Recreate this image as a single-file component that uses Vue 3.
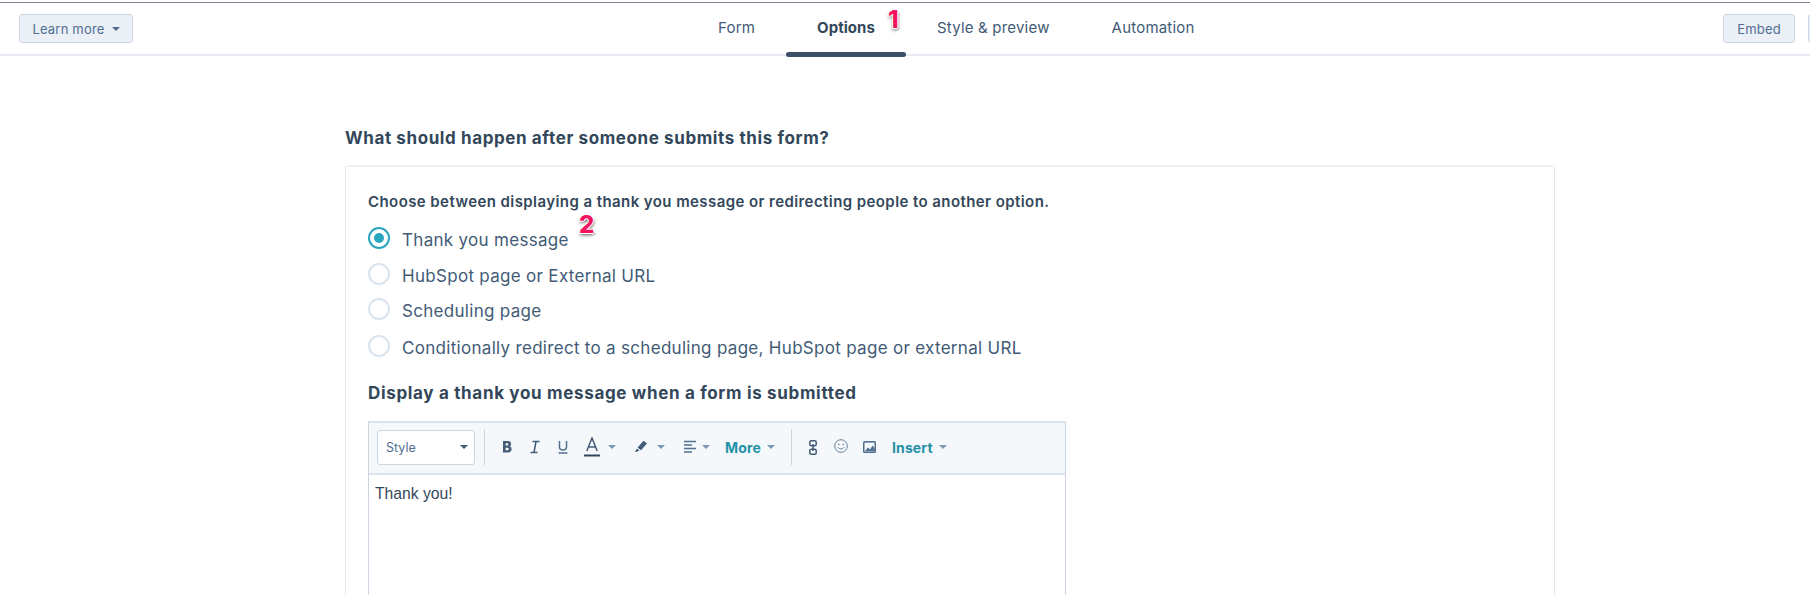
<script setup>
const tabs = [
  { label: 'Form' },
  { label: 'Options', active: true },
  { label: 'Style & preview' },
  { label: 'Automation' },
]
const options = [
  { label: 'Thank you message', checked: true },
  { label: 'HubSpot page or External URL' },
  { label: 'Scheduling page' },
  { label: 'Conditionally redirect to a scheduling page, HubSpot page or external URL' },
]
</script>

<template>
  <div class="page">
    <header class="topbar">
      <div class="side left">
        <button class="btn learn">Learn more <i class="caret"></i></button>
      </div>
      <nav class="tabs">
        <a v-for="t in tabs" :key="t.label" class="tab" :class="{ active: t.active }">
          {{ t.label }}
          <span v-if="t.active" class="marker marker-one">1</span>
        </a>
      </nav>
      <div class="side right">
        <button class="btn embed">Embed</button>
        <button class="btn stub"></button>
      </div>
    </header>

    <main class="content">
      <h2 class="title">What should happen after someone submits this form?</h2>
      <section class="card">
        <p class="lead">Choose between displaying a thank you message or redirecting people to another option.</p>
        <div class="radios">
          <label v-for="o in options" :key="o.label" class="radio">
            <span class="dot" :class="{ on: o.checked }"></span>
            <span class="radio-text">{{ o.label }}
              <span v-if="o.checked" class="marker marker-two">2</span>
            </span>
          </label>
        </div>
        <h3 class="sub">Display a thank you message when a form is submitted</h3>
        <div class="editor">
          <div class="toolbar">
            <div class="select"><span>Style</span><i class="caret dark"></i></div>
            <span class="sep first"></span>
            <svg class="t-b" viewBox="0 0 14 14" width="14" height="14"><path fill="#425b76" d="M3 1h4.800c2.100 0 3.300 1.100 3.300 2.900 0 1.100-.6 1.900-1.500 2.300 1.200.4 2 1.300 2 2.700 0 2-1.400 3.600-3.600 3.600H3zm2.600 2.300v2.300h1.600c.7 0 1.200-.5 1.200-1.200s-.5-1.100-1.200-1.100zm0 4.400v2.500h1.900c.8 0 1.300-.5 1.300-1.300s-.5-1.200-1.300-1.200z"/></svg>
            <svg class="t-i" viewBox="0 0 14 14" width="14" height="14"><path fill="none" stroke="#425b76" stroke-width="1.500" d="M4.500 1.500h7M2.500 12.500h7M8 1.500 6 12.500"/></svg>
            <svg class="t-u" viewBox="0 0 14 14" width="14" height="14"><path fill="none" stroke="#516f90" stroke-width="1.500" d="M3.500 1v6c0 2 1.400 3 3.500 3s3.500-1 3.500-3V1M2.500 13h9"/></svg>
            <svg class="t-a" viewBox="0 0 16 20" width="16" height="20"><path fill="none" stroke="#425b76" stroke-width="1.500" d="M2.800 14 8 1l5.200 13M4.500 10h7"/><path stroke="#33475b" stroke-width="2" d="M0 18.500h16"/></svg>
            <i class="caret soft c-a"></i>
            <svg class="t-pen" viewBox="0 0 14 14" width="14" height="14"><path fill="#425b76" d="M9.500.8 13 3.600 7 10.200 3.600 7.600zM3 8.500l2.300 1.900-1.600 1.200-2.900.4z"/></svg>
            <i class="caret soft c-pen"></i>
            <svg class="t-align" viewBox="0 0 14 14" width="14" height="14"><path stroke="#516f90" stroke-width="1.500" d="M1 1.500h12M1 5h8M1 8.500h12M1 12h8"/></svg>
            <i class="caret soft c-align"></i>
            <span class="link-btn more">More <i class="caret soft"></i></span>
            <span class="sep second"></span>
            <svg class="t-link" viewBox="0 0 8 15" width="8" height="15"><g fill="none" stroke="#425b76" stroke-width="1.500"><rect x=".8" y=".8" width="6.400" height="5" rx="1.500"/><rect x=".8" y="9.200" width="6.400" height="5" rx="1.500"/></g><path stroke="#425b76" stroke-width="1.500" d="M4 4v7"/></svg>
            <svg class="t-smile" viewBox="0 0 16 16" width="14" height="14"><circle cx="8" cy="8" r="7.200" fill="none" stroke="#516f90" stroke-width="1"/><circle cx="5.500" cy="6.300" r=".9" fill="#516f90"/><circle cx="10.500" cy="6.300" r=".9" fill="#516f90"/><path fill="none" stroke="#516f90" d="M4.500 9.500c1.700 2.400 5.300 2.400 7 0"/></svg>
            <svg class="t-img" viewBox="0 0 13 12" width="13" height="12"><rect width="13" height="12" rx="1.500" fill="#516f90"/><rect x="1.500" y="1.600" width="10" height="8.800" fill="#f5f8fa"/><path fill="#516f90" d="M2 10l3-3.500 2 2 2.600-4 2 3v2.500z"/></svg>
            <span class="link-btn insert">Insert <i class="caret soft"></i></span>
          </div>
          <div class="editor-body">Thank you!</div>
        </div>
      </section>
    </main>
  </div>
</template>

<style>
html, body { margin: 0; background: #fff; overflow: hidden; }
</style>

<style scoped>
.page {
  width: 1810px;
  height: 593px;
  margin-top: 2px;
  box-sizing: border-box;
  overflow: hidden;
  position: relative;
  background: #fff;
  font-family: Inter, "Noto Sans", sans-serif;
  color: #33475b;
  border-top: 1px solid #7c8894;
}
.topbar {
  display: flex;
  align-items: flex-start;
  justify-content: space-between;
  height: 51px;
  border-bottom: 2px solid #e5ebf1;
  position: relative;
}
.side { display: flex; padding-top: 11px; }
.side.left { padding-left: 19px; }
.side.right { gap: 13px; margin-right: -70px; }
.btn {
  box-sizing: border-box;
  height: 29px;
  padding: 0;
  background: #eaf0f6;
  border: 1px solid #cbd6e2;
  border-radius: 3px;
  color: #506e91;
  font: 400 13px Inter, sans-serif;
  letter-spacing: .2px;
  display: flex;
  align-items: center;
  justify-content: center;
  gap: 7px;
}
.btn.learn { width: 114px; }
.btn.embed { width: 72px; }
.btn.stub { width: 72px; }
.caret {
  display: inline-block;
  flex: none;
  width: 0;
  height: 0;
  border-left: 4px solid transparent;
  border-right: 4px solid transparent;
  border-top: 4px solid #506e91;
}
.caret.dark { border-top-color: #425b76; }
.caret.soft { border-top-color: #7c98b6; }
.tabs {
  display: flex;
  position: absolute;
  left: 687px;
  top: 0;
}
.tab {
  position: relative;
  height: 51px;
  padding: 0 31px;
  font-size: 15px;
  letter-spacing: .2px;
  line-height: 50px;
  color: #425b76;
  white-space: nowrap;
}
.tab.active { font-weight: 700; color: #33475b; letter-spacing: .05px; }
.tab.active::after {
  content: "";
  position: absolute;
  left: 0;
  right: 0;
  bottom: -3px;
  height: 5px;
  border-radius: 3px;
  background: #3a5169;
}
.marker {
  position: absolute;
  color: #f2145e;
  font-weight: 800;
  font-size: 24px;
  line-height: 1;
  letter-spacing: 0;
  font-family: Inter, sans-serif;
  text-shadow: 1px 0 0 #fff, -1px 0 0 #fff, 0 -1px 0 #fff, 0 1px 0 #fff, 2px 2px 2px rgba(0, 0, 0, .3), -1px 3px 3px rgba(0, 0, 0, .3);
}
.marker-one { left: 102px; top: 5px; }
.marker-two { left: 177px; top: -14px; }
.content { padding: 70px 255px 0 345px; }
.title {
  margin: 0 0 15px;
  font-size: 17px;
  letter-spacing: .6px;
  line-height: 24px;
  font-weight: 700;
  color: #33475b;
}
.card {
  border: 1px solid #e6e6f2;
  border-top: 2px solid #f0f0f6;
  border-radius: 3px;
  padding: 25px 22px 0;
  height: 460px;
}
.lead {
  margin: 0 0 11px;
  font-size: 15px;
  letter-spacing: .42px;
  line-height: 20px;
  font-weight: 600;
}
.radios { display: flex; flex-direction: column; }
.radio {
  display: flex;
  align-items: center;
  gap: 12px;
  height: 30px;
  font-size: 17px;
  letter-spacing: .3px;
  color: #425b76;
}
.radio:nth-child(2) { margin-top: 6px; }
.radio:nth-child(3) { margin-top: 5px; }
.radio:nth-child(4) { margin-top: 7px; }
.radio-text { position: relative; padding-top: 3px; }
.dot {
  box-sizing: border-box;
  width: 22px;
  height: 22px;
  border: 2px solid #dbe4ee;
  border-radius: 50%;
  background: #fff;
  position: relative;
}
.dot.on { border-color: #2aa7bf; }
.dot.on::after {
  content: "";
  position: absolute;
  inset: 4px;
  border-radius: 50%;
  background: #2aa7bf;
}
.sub {
  margin: 20px 0 16px;
  font-size: 17px;
  letter-spacing: .67px;
  line-height: 24px;
  font-weight: 700;
}
.editor {
  width: 698px;
  height: 300px;
  box-sizing: border-box;
  border: 1px solid #cbd6e2;
  border-top: 2px solid #dfe3eb;
}
.toolbar {
  height: 52px;
  box-sizing: border-box;
  display: flex;
  align-items: center;
  background: #f5f8fa;
  border-bottom: 2px solid #dfe3eb;
  padding: 0 0 2px 8px;
}
.select {
  box-sizing: border-box;
  width: 98px;
  height: 35px;
  background: #fff;
  border: 1px solid #cbd6e2;
  border-radius: 3px;
  padding: 0 6px 0 8px;
  display: flex;
  align-items: center;
  justify-content: space-between;
  font-size: 12.500px;
  color: #516f90;
}
.sep { flex: none; width: 1px; height: 36px; background: #cbd6e2; }
.sep.first { margin-left: 9px; }
.sep.second { margin-left: 16px; }
.toolbar svg { flex: none; }
.t-b { margin-left: 15px; }
.t-i, .t-u, .t-a { margin-left: 14px; }
.c-a { margin-left: 8px; }
.t-pen { margin-left: 18px; }
.c-pen { margin-left: 9px; }
.t-align { margin-left: 18px; }
.c-align { margin-left: 5px; }
.link-btn {
  color: #2392a8;
  font-size: 14px;
  letter-spacing: .15px;
  font-weight: 700;
  display: inline-flex;
  align-items: center;
  gap: 6px;
}
.more { margin-left: 15px; }
.t-link { margin-left: 17px; }
.t-smile { margin-left: 17px; margin-top: -2px; }
.t-img { margin-left: 15px; }
.insert { margin-left: 16px; }
.editor-body {
  padding: 9px 6px;
  font: 15.700px/20px "Liberation Sans", Arial, sans-serif;
  color: #33475b;
}
</style>
